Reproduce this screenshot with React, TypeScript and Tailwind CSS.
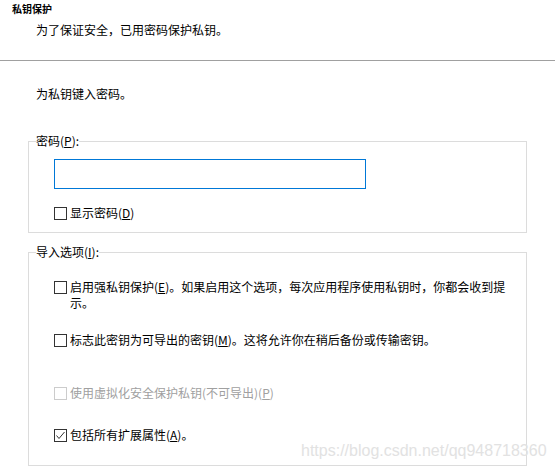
import React from "react";

function Box({ checked, disabled }: { checked?: boolean; disabled?: boolean }) {
  return (
    <span
      className={
        "mt-[2px] flex h-[13px] w-[13px] shrink-0 items-center justify-center border bg-white " +
        (disabled ? "border-[#cccccc]" : "border-[#333333]")
      }
    >
      {checked ? (
        <svg width="11" height="11" viewBox="0 0 11 11">
          <polyline points="1.5,5.5 4,8.5 9.5,2" fill="none" stroke="#333" strokeWidth="1" />
        </svg>
      ) : null}
    </span>
  );
}

function Row({
  children,
  checked,
  disabled,
  className = "",
}: {
  children: React.ReactNode;
  checked?: boolean;
  disabled?: boolean;
  className?: string;
}) {
  return (
    <label className={"flex items-start gap-[3px] leading-[16px] " + className}>
      <Box checked={checked} disabled={disabled} />
      <span className={disabled ? "text-[#a0a0a0]" : ""}>{children}</span>
    </label>
  );
}

export default function App() {
  return (
    <div className="relative h-[469px] w-[555px] overflow-hidden bg-white font-['Noto_Sans_CJK_SC',sans-serif] text-[12px] text-black">
      <div className="h-[16px] pl-3 pt-[1px] text-[10px] font-bold leading-[16px]">私钥保护</div>
      <div className="mt-[6px] pl-9 leading-[16px]">为了保证安全，已用密码保护私钥。</div>
      <div className="mt-[22px] h-px bg-[#a0a0a0]" />
      <div className="mt-[25px] pl-9 leading-[16px]">为私钥键入密码。</div>

      <fieldset className="ml-[28px] mt-[31px] w-[499px] border border-[#dcdcdc] pb-[11px] pl-[25px] pt-[10px]">
        <legend className="-ml-[18px] leading-[16px]">
          密码(<span className="underline">P</span>):
        </legend>
        <input type="password" className="block h-[30px] w-[312px] border border-[#0078d7] bg-white outline-none" />
        <Row className="mt-[16px]">
          显示密码(<span className="underline">D</span>)
        </Row>
      </fieldset>

      <fieldset className="ml-[28px] mt-[11px] w-[499px] border border-[#dcdcdc] pb-[22px] pl-[25px] pr-[12px] pt-[19px]">
        <legend className="-ml-[18px] leading-[16px]">
          导入选项(<span className="underline">I</span>):
        </legend>
        <Row>
          启用强私钥保护(<span className="underline">E</span>)。如果启用这个选项，每次应用程序使用私钥时，你都会收到提示。
        </Row>
        <Row className="mt-[21px]">
          标志此密钥为可导出的密钥(<span className="underline">M</span>)。这将允许你在稍后备份或传输密钥。
        </Row>
        <Row className="mt-[37px]" disabled>
          使用虚拟化安全保护私钥(不可导出)(<span className="underline">P</span>)
        </Row>
        <Row className="mt-[26px]" checked>
          包括所有扩展属性(<span className="underline">A</span>)。
        </Row>
      </fieldset>

      <div className="absolute left-[301px] top-[443px] whitespace-nowrap font-['Liberation_Sans',sans-serif] text-[16px] leading-[16px] text-[#e2e2e2]">
        https://blog.csdn.net/qq948718360
      </div>
    </div>
  );
}
